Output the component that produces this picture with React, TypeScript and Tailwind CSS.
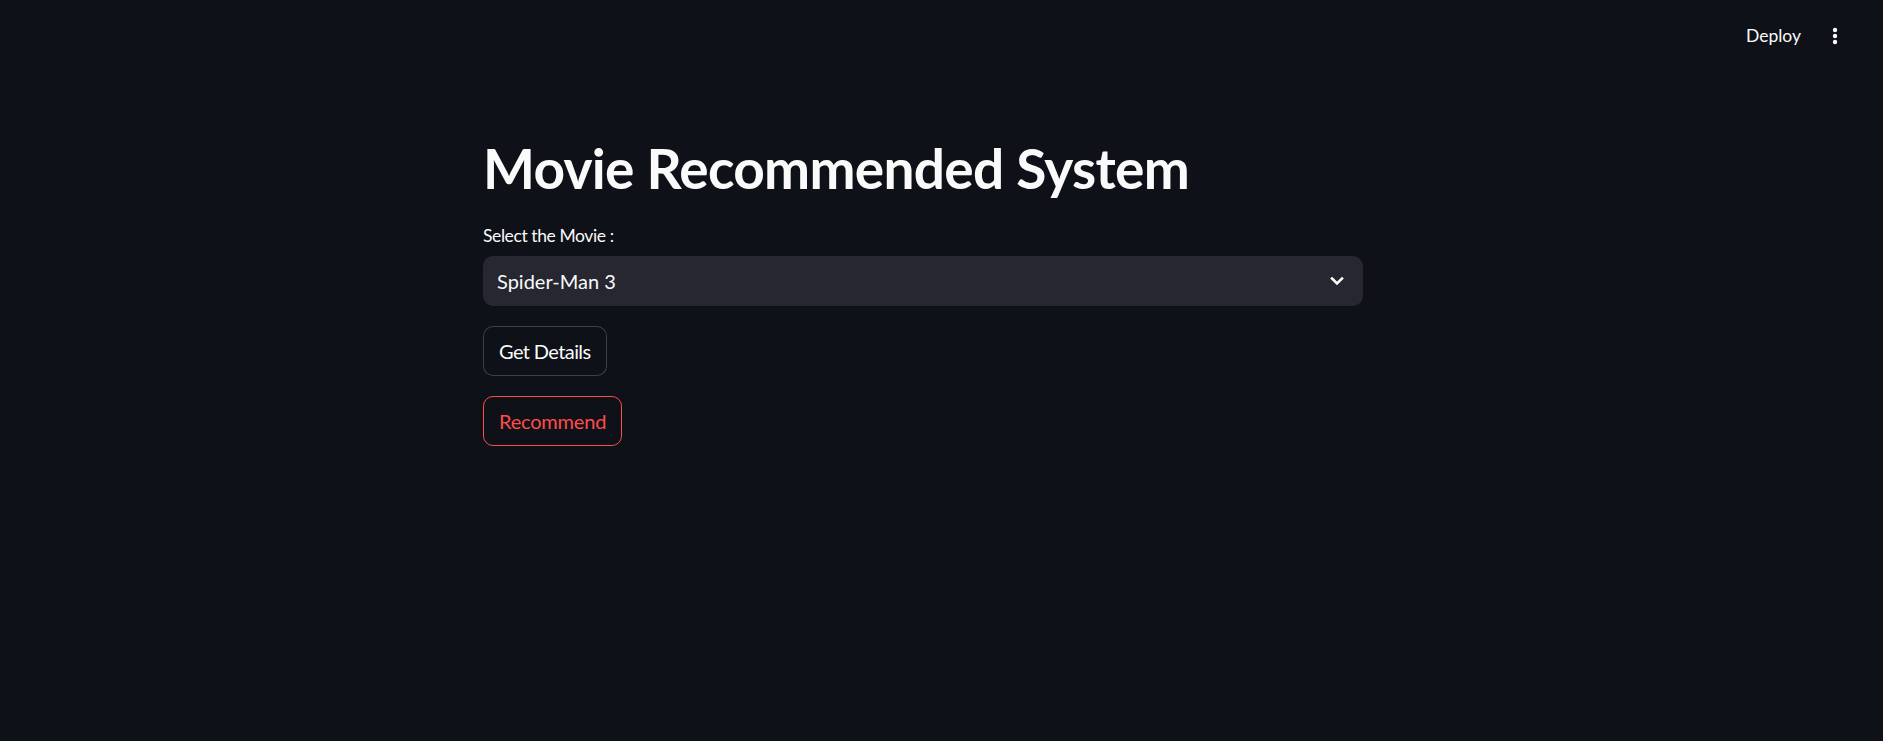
const font = { fontFamily: "Lato, 'Noto Sans', sans-serif" };

function Chevron() {
    return (
        <svg width="14" height="10" viewBox="0 0 14 10" fill="none">
            <path d="M2 2.5 L7 7.5 L12 2.5" stroke="#fafafa" strokeWidth="2.6" strokeLinecap="square" />
        </svg>
    );
}

function Kebab() {
    return (
        <svg width="6" height="18" viewBox="0 0 6 18" fill="#fafafa">
            <circle cx="3" cy="3" r="2.2" />
            <circle cx="3" cy="9" r="2.2" />
            <circle cx="3" cy="15" r="2.2" />
        </svg>
    );
}

export default function App() {
    return (
        <div className="w-full h-[741px] bg-[#0e1117] text-[#fafafa] overflow-hidden" style={font}>
            <header className="h-[72px] flex flex-row justify-end items-center pr-[45px] gap-[31px]">
                <span className="text-[17.5px] leading-none">Deploy</span>
                <Kebab />
            </header>

            <main className="pl-[483px] w-[1363px] flex flex-col">
                <h1 className="mt-[63px] text-[55px] leading-[66px] font-bold tracking-[-0.7px]">
                    Movie Recommended System
                </h1>

                <label className="mt-[24px] text-[17.5px] leading-[22px] tracking-[-0.4px]">Select the Movie :</label>

                <div className="mt-[9px] h-[50px] rounded-[10px] bg-[#262730] flex flex-row items-center justify-between pl-[14px] pr-[19px]">
                    <span className="text-[20px]">Spider-Man 3</span>
                    <Chevron />
                </div>

                <div className="mt-[20px] flex flex-col gap-[20px] items-start">
                    <button className="h-[50px] px-[15px] rounded-[10px] border border-[rgba(250,250,250,0.2)] bg-[#0e1117] text-[20px] tracking-[-0.6px] text-[#fafafa]">
                        Get Details
                    </button>
                    <button className="h-[50px] px-[15px] rounded-[10px] border border-[#ff4b4b] bg-[#0e1117] text-[20px] tracking-[-0.2px] text-[#ff4b4b]">
                        Recommend
                    </button>
                </div>
            </main>
        </div>
    );
}
